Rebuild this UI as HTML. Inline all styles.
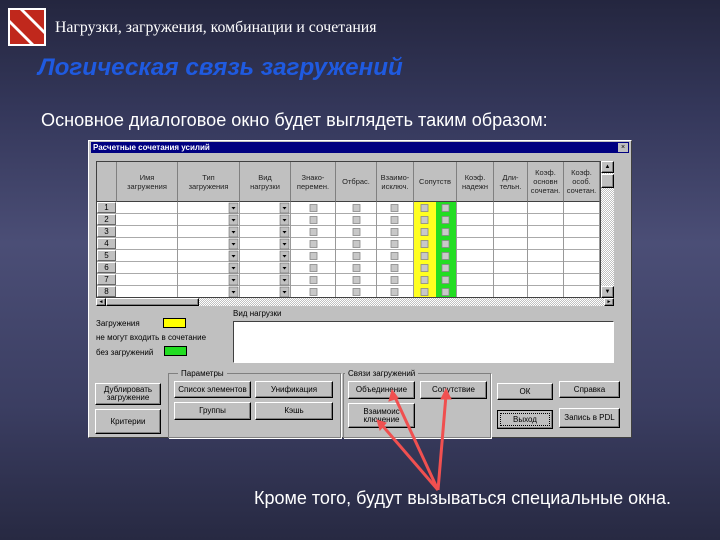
<!DOCTYPE html><html><head><meta charset="utf-8"><style>
*{margin:0;padding:0;box-sizing:border-box}
body{width:720px;height:540px;overflow:hidden;position:relative;font-family:"Liberation Sans",sans-serif;
background:linear-gradient(180deg,#24263f 0%,#34375a 20%,#4b4e76 45%,#3b3e62 75%,#272942 100%);}
.a{position:absolute}
.dlg{left:88px;top:140px;width:544px;height:298px;background:#c0c0c0;border:1px solid #fff;border-right-color:#404040;border-bottom-color:#404040}
.tb{left:91px;top:142px;width:538px;height:11px;background:#000080;color:#fff;font-size:8px;font-weight:bold;line-height:11px;padding-left:2px}
.t{font-size:8px;color:#000;white-space:nowrap;line-height:9px}
.btn{position:absolute;background:#c0c0c0;border:1px solid #fff;border-right-color:#000;border-bottom-color:#000;box-shadow:inset -1px -1px 0 #808080;font-size:8px;text-align:center;display:flex;align-items:center;justify-content:center;line-height:8px}
.grid{left:96px;top:161px;width:505px;height:137px;background:#fff;overflow:hidden;border:1px solid #404040}
.h{position:absolute;top:0;height:40px;background:#c0c0c0;border-right:1px solid #808080;border-bottom:1px solid #404040;font-size:7.5px;text-align:center;display:flex;align-items:center;justify-content:center;line-height:9px;color:#222}
.col{position:absolute;top:40px;bottom:0;border-right:1px solid #999}
.rows{position:absolute;left:0;top:40px;width:505px;bottom:0;background:repeating-linear-gradient(180deg,transparent 0 11px,#aaa 11px 12px)}
.rh{position:absolute;left:0;width:19px;height:11px;background:#c0c0c0;border:1px solid #fff;border-right-color:#666;border-bottom-color:#666;font-size:8px;text-align:center;line-height:10px}
</style></head><body>
<div class="a" style="left:8px;top:8px;width:38px;height:38px;background:#fff"></div>
<svg class="a" style="left:10px;top:10px" width="34" height="34"><rect width="34" height="34" fill="#c0281c"/><path d="M0 10 L24 34 L20 34 L0 14Z M10 0 L34 24 L34 20 L14 0Z" fill="#fff"/></svg>
<div class="a" style="left:55px;top:19px;color:#fff;font-family:'Liberation Serif',serif;font-size:15.8px;white-space:nowrap">Нагрузки, загружения, комбинации и сочетания</div>
<div class="a" style="left:38px;top:54px;color:#1f5ae0;font-size:24.2px;font-weight:bold;font-style:italic;white-space:nowrap">Логическая связь загружений</div>
<div class="a" style="left:41px;top:110px;color:#fff;font-size:18.1px;white-space:nowrap">Основное диалоговое окно будет выглядеть таким образом:</div>

<div class="a dlg"></div>
<div class="a tb">Расчетные сочетания усилий</div>
<div class="a" style="left:618px;top:143px;width:10px;height:9px;background:#c0c0c0;font-size:7px;text-align:center;line-height:9px">×</div>

<div class="a grid">
<div class="rows"></div>
<div class="h" style="left:0;width:20px"></div>
<div class="h" style="left:20px;width:61px">Имя<br>загружения</div>
<div class="h" style="left:81px;width:62px">Тип<br>загружения</div>
<div class="h" style="left:143px;width:51px">Вид<br>нагрузки</div>
<div class="h" style="left:194px;width:45px">Знако-<br>перемен.</div>
<div class="h" style="left:239px;width:41px">Отбрас.</div>
<div class="h" style="left:280px;width:37px">Взаимо-<br>исключ.</div>
<div class="h" style="left:317px;width:43px">Сопутств</div>
<div class="h" style="left:360px;width:37px">Коэф.<br>надежн</div>
<div class="h" style="left:397px;width:34px">Дли-<br>тельн.</div>
<div class="h" style="left:431px;width:36px">Коэф.<br>основн<br>сочетан.</div>
<div class="h" style="left:467px;width:36px">Коэф.<br>особ.<br>сочетан.</div>
<div class="a" style="left:317px;top:40px;width:22px;height:100px;background:#ffff20"></div>
<div class="a" style="left:339px;top:40px;width:21px;height:100px;background:#22dd22"></div>
<div class="col" style="left:0;width:81px"></div><div class="col" style="left:81px;width:62px"></div><div class="col" style="left:143px;width:51px"></div><div class="col" style="left:194px;width:45px"></div><div class="col" style="left:239px;width:41px"></div><div class="col" style="left:280px;width:37px"></div><div class="col" style="left:317px;width:43px"></div><div class="col" style="left:360px;width:37px"></div><div class="col" style="left:397px;width:34px"></div><div class="col" style="left:431px;width:36px"></div><div class="col" style="left:467px;width:36px"></div>
<div class="rh" style="top:40px">1</div><div class="rh" style="top:52px">2</div><div class="rh" style="top:64px">3</div><div class="rh" style="top:76px">4</div><div class="rh" style="top:88px">5</div><div class="rh" style="top:100px">6</div><div class="rh" style="top:112px">7</div><div class="rh" style="top:124px">8</div>
<svg class="a" style="left:0;top:40px" width="505" height="100">
<defs><g id="r"><rect x="132" y="1" width="9" height="10" fill="#c0c0c0" stroke="#555" stroke-width=".5"/><path d="M134.5 5h4l-2 2.5z" fill="#000"/><rect x="183" y="1" width="9" height="10" fill="#c0c0c0" stroke="#555" stroke-width=".5"/><path d="M185.5 5h4l-2 2.5z" fill="#000"/>
<rect x="213" y="2.5" width="7" height="7" fill="#c8c8c8" stroke="#888" stroke-width=".8"/><rect x="256" y="2.5" width="7" height="7" fill="#c8c8c8" stroke="#888" stroke-width=".8"/><rect x="294" y="2.5" width="7" height="7" fill="#c8c8c8" stroke="#888" stroke-width=".8"/><rect x="324" y="2.5" width="7" height="7" fill="#c8c8c8" stroke="#888" stroke-width=".8"/><rect x="345" y="2.5" width="7" height="7" fill="#c8c8c8" stroke="#888" stroke-width=".8"/></g></defs>
<use href="#r" y="0"/><use href="#r" y="12"/><use href="#r" y="24"/><use href="#r" y="36"/><use href="#r" y="48"/><use href="#r" y="60"/><use href="#r" y="72"/><use href="#r" y="84"/>
</svg>
</div>
<div class="a" style="left:601px;top:161px;width:13px;height:137px;background:repeating-conic-gradient(#c0c0c0 0 25%,#fff 0 50%) 0 0/2px 2px"></div>
<div class="btn" style="left:601px;top:161px;width:13px;height:12px;font-size:6px">▲</div>
<div class="btn" style="left:601px;top:174px;width:13px;height:14px"></div>
<div class="btn" style="left:601px;top:286px;width:13px;height:12px;font-size:6px">▼</div>
<div class="a" style="left:96px;top:298px;width:518px;height:8px;background:repeating-conic-gradient(#c0c0c0 0 25%,#fff 0 50%) 0 0/2px 2px"></div>
<div class="btn" style="left:96px;top:298px;width:10px;height:8px;font-size:5px">◄</div>
<div class="btn" style="left:106px;top:298px;width:93px;height:8px"></div>
<div class="btn" style="left:604px;top:298px;width:10px;height:8px;font-size:5px">►</div>

<div class="a t" style="left:96px;top:319px">Загружения</div>
<div class="a" style="left:163px;top:318px;width:23px;height:10px;background:#ffff00;border:1px solid #000"></div>
<div class="a t" style="left:96px;top:333px">не могут входить в сочетание</div>
<div class="a t" style="left:96px;top:348px">без загружений</div>
<div class="a" style="left:164px;top:346px;width:23px;height:10px;background:#22dd22;border:1px solid #000"></div>
<div class="a t" style="left:233px;top:309px">Вид нагрузки</div>
<div class="a" style="left:233px;top:321px;width:381px;height:42px;background:#fff;border:1px solid #404040;border-right-color:#fff;border-bottom-color:#fff"></div>

<div class="a" style="left:168px;top:373px;width:173px;height:65px;border:1px solid #808080;box-shadow:1px 1px 0 #fff"></div>
<div class="a t" style="left:178px;top:369px;background:#c0c0c0;padding:0 3px">Параметры</div>
<div class="a" style="left:343px;top:373px;width:148px;height:65px;border:1px solid #808080;box-shadow:1px 1px 0 #fff"></div>
<div class="a t" style="left:345px;top:369px;background:#c0c0c0;padding:0 3px">Связи загружений</div>

<div class="btn" style="left:95px;top:383px;width:66px;height:22px">Дублировать<br>загружение</div>
<div class="btn" style="left:95px;top:409px;width:66px;height:25px">Критерии</div>
<div class="btn" style="left:174px;top:381px;width:77px;height:17px">Список элементов</div>
<div class="btn" style="left:255px;top:381px;width:78px;height:17px">Унификация</div>
<div class="btn" style="left:174px;top:402px;width:77px;height:18px">Группы</div>
<div class="btn" style="left:255px;top:402px;width:78px;height:18px">Кэшь</div>
<div class="btn" style="left:348px;top:381px;width:67px;height:18px">Объединение</div>
<div class="btn" style="left:420px;top:381px;width:67px;height:18px">Сопутствие</div>
<div class="btn" style="left:348px;top:403px;width:67px;height:25px">Взаимоис<br>ключение</div>
<div class="btn" style="left:497px;top:383px;width:56px;height:17px">ОК</div>
<div class="btn" style="left:559px;top:381px;width:61px;height:17px">Справка</div>
<div class="btn" style="left:497px;top:410px;width:56px;height:19px;border:1px solid #000;outline:1px dotted #000;outline-offset:-4px">Выход</div>
<div class="btn" style="left:559px;top:408px;width:61px;height:20px">Запись в PDL</div>

<svg class="a" style="left:0;top:0" width="720" height="540"><g stroke="#f05050" stroke-width="3" fill="#f05050">
<line x1="438" y1="490" x2="394" y2="395"/><line x1="438" y1="490" x2="381" y2="424"/><line x1="438" y1="490" x2="446" y2="395"/>
<path d="M392 390 L389 401 L398 398Z" stroke-width="1"/><path d="M377 420 L380 430 L386 423Z" stroke-width="1"/><path d="M446 389 L441 399 L451 399Z" stroke-width="1"/></g></svg>
<div class="a" style="left:254px;top:488px;color:#fff;font-size:18px;white-space:nowrap">Кроме того, будут вызываться специальные окна.</div>
</body></html>
